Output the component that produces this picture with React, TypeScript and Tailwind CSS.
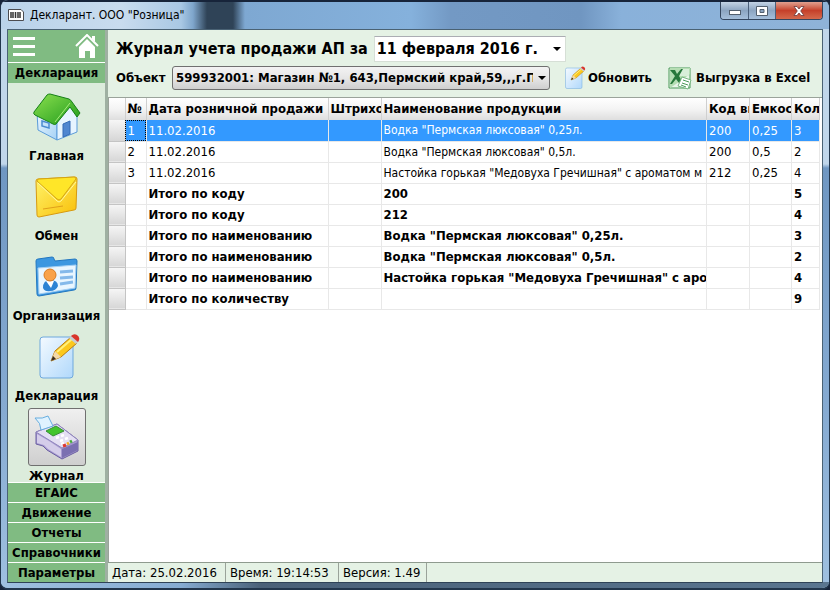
import React, { useState } from 'react';

interface Row {
    no: string;
    date: string;
    name: string;
    code: string;
    volume: string;
    count: string;
    total?: boolean;
}

const ROWS: Row[] = [
    { no: '1', date: '11.02.2016', name: 'Водка "Пермская люксовая" 0,25л.', code: '200', volume: '0,25', count: '3' },
    { no: '2', date: '11.02.2016', name: 'Водка "Пермская люксовая" 0,5л.', code: '200', volume: '0,5', count: '2' },
    { no: '3', date: '11.02.2016', name: 'Настойка горькая "Медовуха Гречишная" с ароматом м', code: '212', volume: '0,25', count: '4' },
    { no: '', date: 'Итого по коду', name: '200', code: '', volume: '', count: '5', total: true },
    { no: '', date: 'Итого по коду', name: '212', code: '', volume: '', count: '4', total: true },
    { no: '', date: 'Итого по наименованию', name: 'Водка "Пермская люксовая" 0,25л.', code: '', volume: '', count: '3', total: true },
    { no: '', date: 'Итого по наименованию', name: 'Водка "Пермская люксовая" 0,5л.', code: '', volume: '', count: '2', total: true },
    { no: '', date: 'Итого по наименованию', name: 'Настойка горькая "Медовуха Гречишная" с аром', code: '', volume: '', count: '4', total: true },
    { no: '', date: 'Итого по количеству', name: '', code: '', volume: '', count: '9', total: true },
];

const COLUMNS = [
    { title: '№', width: 'w-[21px]' },
    { title: 'Дата розничной продажи', width: 'w-[182px]' },
    { title: 'Штрихо', width: 'w-[53px]' },
    { title: 'Наименование продукции', width: '' },
    { title: 'Код ви', width: 'w-[43px]' },
    { title: 'Емкос', width: 'w-[42px]' },
    { title: 'Кол', width: 'w-[28px]' },
];

const SECTIONS = ['ЕГАИС', 'Движение', 'Отчеты', 'Справочники', 'Параметры'];

function HouseIcon() {
    return (
        <svg viewBox="0 0 48 48" className="size-12" aria-hidden="true">
            <defs>
                <linearGradient id="roof" x1="0" y1="0" x2="1" y2="1">
                    <stop offset="0" stopColor="#8be04e" />
                    <stop offset="1" stopColor="#1f9a1c" />
                </linearGradient>
                <linearGradient id="wall" x1="0" y1="0" x2="1" y2="1">
                    <stop offset="0" stopColor="#f4fbff" />
                    <stop offset="1" stopColor="#a6d2f6" />
                </linearGradient>
            </defs>
            <path d="M4 19 16 11 24 29V47L5 37Z" fill="url(#wall)" stroke="#5b9bd8" />
            <path d="M24 29 37 13 44 23V39L24 47Z" fill="#e6f4ff" stroke="#5b9bd8" />
            <path d="M1 19 14 2Q15 1 17 1L36 6Q38 7 39 9L47 20 44 24 37 14 23 31Q22 32 20 31L2 22Q0 21 1 19Z" fill="url(#roof)" stroke="#168018" strokeLinejoin="round" />
            <path d="M37 10 22 29" stroke="#a6ec7a" fill="none" />
            <path d="M30 31 37 28V41L30 44Z" fill="#4f86d0" stroke="#356bb5" />
            <path d="M9 28 16 30V35L9 33Z" fill="#c4e2fc" stroke="#4b8cd0" strokeWidth="1.5" />
        </svg>
    );
}

function MailIcon() {
    return (
        <svg viewBox="0 0 48 48" className="size-12" aria-hidden="true">
            <defs>
                <linearGradient id="mail" x1="0" y1="0" x2="1" y2="1">
                    <stop offset="0" stopColor="#fff36a" />
                    <stop offset="1" stopColor="#f9bf08" />
                </linearGradient>
            </defs>
            <path d="M5 6 42 4Q44 4 44 6L43 35Q43 37 41 37L6 44Q4 44 4 42L3 8Q3 6 5 6Z" fill="url(#mail)" stroke="#d79a10" />
            <path d="M4 8 24 26Q26 28 28 26L43 6Q43 4 41 4L6 6Q4 6 4 8Z" fill="#ffe628" stroke="#d3a414" strokeLinejoin="round" />
            <path d="M5 10 24 28Q26 30 28 28L43 9" fill="none" stroke="#fff9a0" />
            <path d="M10 36 30 33" stroke="#e0a01a" />
        </svg>
    );
}

function FolderIcon() {
    return (
        <svg viewBox="0 0 48 48" className="size-12" aria-hidden="true">
            <path d="M3 8Q3 6 5 6L19 4Q21 4 21 6L22 8 42 6Q44 6 44 8L43 35Q43 37 41 37L6 43Q4 43 4 41Z" fill="#3c97e0" stroke="#2377c0" />
            <path d="M5 15 43 12 42 35 6 41Z" fill="#e9f6ff" stroke="#a3cff3" />
            <path d="M27 19 40 18M27 25 40 24M27 31 40 29" stroke="#84b9ea" strokeWidth="3" />
            <path d="M10 35Q10 27 17 27 25 27 25 33 23 38 17 38 12 39 10 35Z" fill="#2c83d4" />
            <path d="M13 28 18 35 21 28Z" fill="#fff" />
            <circle cx="17" cy="22" r="6" fill="#f9a24a" stroke="#d97c22" />
        </svg>
    );
}

function NoteIcon({ className }: { className: string }) {
    return (
        <svg viewBox="0 0 48 48" className={className} aria-hidden="true">
            <defs>
                <linearGradient id="sheet" x1="0" y1="0" x2="1" y2="1">
                    <stop offset="0" stopColor="#f4faff" />
                    <stop offset="1" stopColor="#b0d8fb" />
                </linearGradient>
            </defs>
            <rect x="7" y="4" width="33" height="41" rx="3" fill="url(#sheet)" stroke="#6fa8dd" />
            <path d="M18 28 22 18 38 4 44 10 28 24Z" fill="#fbc81e" stroke="#b97c10" strokeLinejoin="round" />
            <path d="M24 19 39 6" stroke="#fff07a" strokeWidth="2" />
            <path d="M18 28 22 18 28 24Z" fill="#f3d9a8" />
            <path d="M18 28 20 23 23 26Z" fill="#3b2d20" />
            <path d="M36 5 39 2 46 8 43 11Z" fill="#c9ccd2" />
            <path d="M38 3Q41 0 44 2 48 5 45 9Z" fill="#d9352b" />
        </svg>
    );
}

function TerminalIcon() {
    return (
        <svg viewBox="0 0 48 48" className="size-12" aria-hidden="true">
            <path d="M3 19 24 11 45 27V38L29 46 14 37 10 33 3 31Z" fill="#a79ad0" stroke="#6b5fa2" strokeLinejoin="round" />
            <path d="M3 19 24 11 45 27 29 35Z" fill="#e4dff3" stroke="#9186be" strokeLinejoin="round" />
            <path d="M29 36 45 29V37L29 45Z" fill="#7b70b1" />
            <path d="M4 21 16 28 28 36V44L15 36 11 32 4 30Z" fill="#d5cdea" />
            <path d="M2 5Q10 6 15 3L20 13 8 17Q8 10 2 5Z" fill="#dff2ff" stroke="#67aee0" />
            <path d="M13 18 23 13 31 18 20 23Z" fill="#43c52d" stroke="#388d35" />
            <path d="M23 25 26 24M28 23 31 22M27 28 30 27M32 26 35 25M28 31 31 30" stroke="#fff" strokeWidth="2.5" />
            <path d="M30 33 33 32" stroke="#df3931" strokeWidth="3" />
            <path d="M34 31 36 30" stroke="#f5ac23" strokeWidth="3" />
            <path d="M37 29 39 28" stroke="#44aa38" strokeWidth="3" />
        </svg>
    );
}

function ExcelIcon() {
    return (
        <svg viewBox="0 0 24 24" className="size-6 shrink-0" aria-hidden="true">
            <path d="M1 2H22V22H1Z" fill="#e9f5e9" stroke="#4b9a58" />
            <path d="M2 2H22V8L14 14 2 22Z" fill="#b5deb3" />
            <path d="M12 3H21V10H12Z" fill="#d9efd9" />
            <path d="M2 4H7L9 8 13 3H15L11 10 15 17H11L8 13 4 18H2L7 10Z" fill="#27783a" />
            <path d="M14 11 23 14 20 23 10 20Z" fill="#fff" stroke="#78b680" />
            <path d="M15 14 21 16M14 17 20 19M13 19 18 21" stroke="#4b9a58" />
        </svg>
    );
}

const ITEMS = [
    { title: 'Главная', icon: <HouseIcon /> },
    { title: 'Обмен', icon: <MailIcon /> },
    { title: 'Организация', icon: <FolderIcon /> },
    { title: 'Декларация', icon: <NoteIcon className="size-12" /> },
    { title: 'Журнал', icon: <TerminalIcon /> },
];

function TitleBar() {
    return (
        <header className="flex h-[29px] shrink-0 items-start justify-between border-t-2 border-[#17243a] bg-[linear-gradient(90deg,#b9d2ea_0px,#c9dcee_120px,#a9c8e4_180px,#7fa6cc_192px,#2f4357_206px,#2f4357_232px,#7ea8d2_244px,#85b1dc_410px,#7399c4_450px,#7096c1_580px,#89b1da_620px,#8fb3d8_100%)] pl-[7px]">
            <div className="flex h-[26px] items-center gap-1.5">
                <svg viewBox="0 0 16 12" className="h-3 w-4" aria-hidden="true">
                    <path d="M.5.5H13L15.5 3V11.5H.5Z" fill="#fff" stroke="#4c4c50" />
                    <path d="M3 3V9M5 3V9M7.5 3V9M10 3V9M12 3V9" stroke="#333" strokeWidth="1.5" />
                </svg>
                <h1 className="text-xs text-black">Декларант. ООО "Розница"</h1>
            </div>
            <div className="mr-1.5 flex h-[18px] overflow-hidden rounded-b border border-t-0 border-[#34465e]">
                <button aria-label="Свернуть" className="flex w-7 items-center justify-center border-r border-[#4b607b] bg-linear-to-b from-[#c3d3e5] via-[#8ca5c1] to-[#a5bfdb]">
                    <svg viewBox="0 0 12 5" className="mt-1 h-[5px] w-3" aria-hidden="true">
                        <rect x=".5" y=".5" width="11" height="4" fill="#fff" stroke="#53606f" />
                    </svg>
                </button>
                <button aria-label="Развернуть" className="flex w-[27px] items-center justify-center border-r border-[#4b607b] bg-linear-to-b from-[#c3d3e5] via-[#8ca5c1] to-[#a5bfdb]">
                    <svg viewBox="0 0 12 10" className="h-2.5 w-3" aria-hidden="true">
                        <path d="M.5.5H11.5V9.5H.5Z" fill="#fff" stroke="#53606f" />
                        <path d="M4 3.5H8V6.5H4Z" fill="#8ca5c1" stroke="#53606f" />
                    </svg>
                </button>
                <button aria-label="Закрыть" className="flex w-[46px] items-center justify-center bg-linear-to-b from-[#e0a08f] via-[#c5402a] to-[#d4694c]">
                    <svg viewBox="0 0 12 10" className="h-2.5 w-3" aria-hidden="true">
                        <path d="M1 .5H4L6 3 8 .5H11L7.7 5 11 9.5H8L6 7 4 9.5H1L4.3 5Z" fill="#fff" stroke="#6c3a3c" strokeWidth=".8" />
                    </svg>
                </button>
            </div>
        </header>
    );
}

function Sidebar() {
    const [active, setActive] = useState('Журнал');

    return (
        <nav className="flex w-[97px] shrink-0 flex-col bg-[#dcecdc] text-center">
            <div className="flex h-8 shrink-0 items-center justify-between bg-[#80bb82] pl-[5px] pr-1.5">
                <button aria-label="Меню" className="flex w-[22px] flex-col gap-[5px]">
                    <span className="h-[3px] w-full bg-white" />
                    <span className="h-[3px] w-full bg-white" />
                    <span className="h-[3px] w-full bg-white" />
                </button>
                <button aria-label="Домой">
                    <svg viewBox="0 0 24 24" className="size-6" aria-hidden="true">
                        <path d="M1 12 12 1 23 12" fill="none" stroke="#fff" strokeWidth="2" />
                        <path d="M4 13 12 5 20 13V24H15V17H10V24H4ZM17 2H20V8L17 5Z" fill="#fff" />
                    </svg>
                </button>
            </div>
            <button className="h-[21px] shrink-0 border-t border-white bg-[#80bb82]">Декларация</button>
            <div className="flex min-h-0 flex-1 flex-col overflow-hidden pt-[5px]">
                {ITEMS.map((item) => (
                    <button key={item.title} onClick={() => setActive(item.title)} className="flex h-20 shrink-0 flex-col items-center">
                        <span className={`flex size-[58px] items-center justify-center rounded-[3px] border ${active === item.title ? 'border-[#707070] bg-linear-to-b from-[#f0f0f0] to-[#cfcfcf]' : 'border-transparent'}`}>
                            {item.icon}
                        </span>
                        <span className="leading-5">{item.title}</span>
                    </button>
                ))}
            </div>
            {SECTIONS.map((section) => (
                <button key={section} className="h-5 shrink-0 border-t border-white bg-[#80bb82] leading-5">{section}</button>
            ))}
        </nav>
    );
}

function Toolbar() {
    const [date, setDate] = useState('11 февраля 2016 г.');

    return (
        <div className="flex shrink-0 flex-col gap-1 bg-[#e5f2e5] pl-2 pt-1.5">
            <div className="flex h-[26px] items-center gap-1.5">
                <label htmlFor="date" className="whitespace-nowrap text-base">Журнал учета продажи АП за</label>
                <div className="flex h-[26px] w-48 items-center border border-[#d6dfd6] border-t-[#abadb3] bg-white">
                    <input id="date" value={date} onChange={(e) => setDate(e.target.value)} className="min-w-0 flex-1 pl-0.5 text-base outline-none" />
                    <button aria-label="Выбрать дату" className="flex w-4 shrink-0 justify-center">
                        <svg viewBox="0 0 8 4" className="h-1 w-2" aria-hidden="true"><path d="M0 0H8L4 4Z" /></svg>
                    </button>
                </div>
            </div>
            <div className="flex h-[31px] items-start">
                <label htmlFor="object" className="w-14 shrink-0 leading-6">Объект</label>
                <div className="relative w-[378px]">
                    <select id="object" className="h-6 w-full appearance-none overflow-hidden rounded-[3px] border border-[#707070] bg-linear-to-b from-[#f3f3f3] via-[#e6e6e6] to-[#cfcfcf] pl-[3px] pr-4 font-bold">
                        <option>599932001: Магазин №1, 643,Пермский край,59,,,г.Пе</option>
                    </select>
                    <svg viewBox="0 0 8 4" className="pointer-events-none absolute right-1 top-2.5 h-1 w-2" aria-hidden="true"><path d="M0 0H8L4 4Z" /></svg>
                </div>
                <button className="ml-3 flex h-6 items-center gap-0.5">
                    <NoteIcon className="size-6" />
                    Обновить
                </button>
                <button className="ml-4 flex h-6 items-center gap-1 whitespace-nowrap">
                    <ExcelIcon />
                    Выгрузка в Excel
                </button>
            </div>
        </div>
    );
}

function Journal() {
    const [selected, setSelected] = useState(0);

    return (
        <div className="min-h-0 flex-1 overflow-hidden border-l border-t border-[#9aa39a] bg-white pr-0.5">
            <table className="w-full table-fixed border-collapse">
                <thead>
                    <tr className="h-[22px] bg-linear-to-b from-white via-[#f4f4f4] to-[#dedede] text-left">
                        <th className="w-4 border-r border-[#cfcfcf]" aria-label="Строка" />
                        {COLUMNS.map((column) => (
                            <th key={column.title} scope="col" className={`${column.width} overflow-hidden whitespace-nowrap border-r border-[#cfcfcf] p-0 pl-0.5`}>
                                {column.title}
                            </th>
                        ))}
                    </tr>
                </thead>
                <tbody>
                    {ROWS.map((row, i) => (
                        <tr
                            key={`row-${i}`}
                            onClick={() => setSelected(i)}
                            className={`h-[21px] ${selected === i ? 'bg-[#3399ff] text-white' : ''} ${row.total ? 'font-bold' : 'font-normal'}`}
                        >
                            <td className="border-b border-r border-[#c4c4c4] bg-linear-to-b from-[#f6f6f6] to-[#d6d6d6]" />
                            {[row.no, row.date, '', row.name, row.code, row.volume, row.count].map((cell, j) => (
                                <td
                                    key={`cell-${j}`}
                                    className={`overflow-hidden whitespace-nowrap border-b border-r border-[#e8e8e8] p-0 pl-0.5 ${j === 3 && !row.total ? 'text-xs' : ''} ${selected === i && j === 0 ? 'outline-1 -outline-offset-1 outline-dotted outline-black' : ''}`}
                                >
                                    {cell}
                                </td>
                            ))}
                        </tr>
                    ))}
                </tbody>
            </table>
        </div>
    );
}

function StatusBar() {
    return (
        <footer className="flex h-5 shrink-0 border-t border-[#8f9b8f] bg-[#e5f2e5] font-normal leading-[19px]">
            <span className="w-[118px] border-r border-[#9aa39a] pl-1">Дата: 25.02.2016</span>
            <span className="w-[113px] border-r border-[#9aa39a] pl-1">Время: 19:14:53</span>
            <span className="w-[88px] border-r border-[#9aa39a] pl-1">Версия: 1.49</span>
        </footer>
    );
}

export default function App() {
    return (
        <div className="h-screen bg-[#17243a]">
            <div className="flex h-full flex-col overflow-hidden rounded-lg border-x border-b-2 border-[#22364c] bg-[linear-gradient(180deg,#c0d6ea_0px,#c0d6ea_164px,#6f97c2_168px,#86abd2_70%,#9fc0e0_100%)] font-['DejaVu_Sans_Condensed','DejaVu_Sans',sans-serif] text-[13px] text-black">
                <TitleBar />
                <div className="flex min-h-0 flex-1 flex-col bg-[linear-gradient(90deg,#9fc0e0_0px,#86acd2_180px,#4a6178_260px,#5a7690_100%)] bg-[length:100%_6px] bg-bottom bg-no-repeat px-1.5 pb-[5px]">
                    <div className="flex min-h-0 flex-1 border border-t-[#4a6274] border-x-[#4a6274] border-b-[#2f4357] font-bold">
                        <Sidebar />
                        <main className="flex min-w-0 flex-1 flex-col border-l-[3px] border-[#9fb0a2]">
                            <Toolbar />
                            <Journal />
                            <StatusBar />
                        </main>
                    </div>
                </div>
            </div>
        </div>
    );
}
